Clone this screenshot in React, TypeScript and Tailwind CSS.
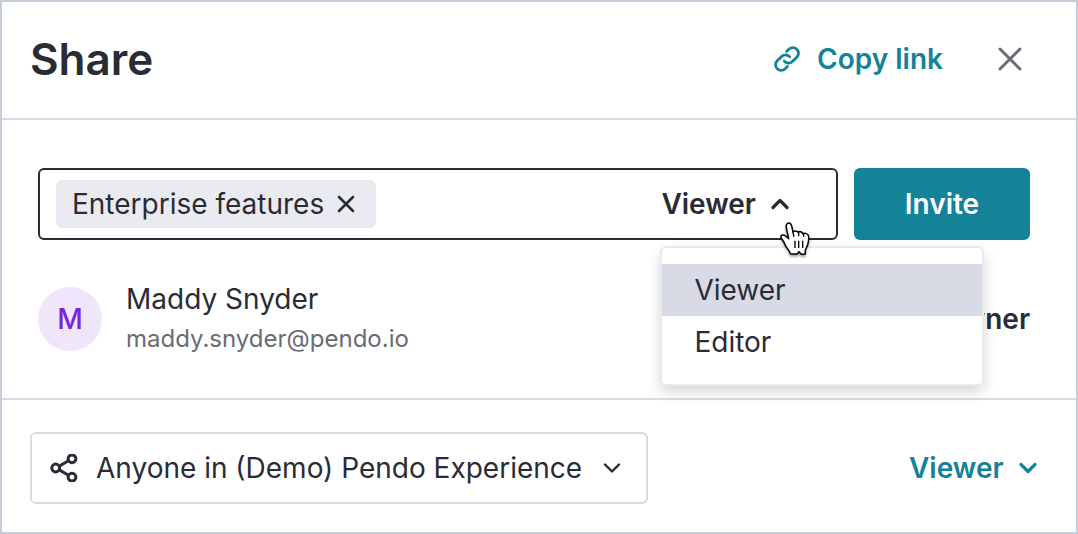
import { useState } from 'react';
import type { ReactNode } from 'react';

type IconProps = {
  className?: string;
  size: number;
  strokeWidth?: number;
  children: ReactNode;
};

const Icon = ({ className = '', size, strokeWidth = 2, children }: IconProps) => (
  <svg
    aria-hidden="true"
    className={`shrink-0 ${className}`}
    fill="none"
    height={size}
    stroke="currentColor"
    strokeLinecap="round"
    strokeLinejoin="round"
    strokeWidth={strokeWidth}
    viewBox={`0 0 ${size} ${size}`}
    width={size}
  >
    {children}
  </svg>
);

const LinkIcon = () => (
  <Icon size={28} strokeWidth={2.8}>
    <path d="M13.6 6.4 15.8 4.2a5.6 5.6 0 0 1 8 8l-4.4 4.4a5.6 5.6 0 0 1-8.2-.4" />
    <path d="M14.4 21.6 12.2 23.8a5.6 5.6 0 0 1-8-8l4.4-4.4a5.6 5.6 0 0 1 8.2.4" />
  </Icon>
);

const ShareIcon = () => (
  <Icon size={28} strokeWidth={3}>
    <circle cx="5.7" cy="14" r="3.9" />
    <circle cx="22" cy="4.8" r="3.9" />
    <circle cx="22" cy="23.2" r="3.9" />
    <path d="M9.2 12.1 18.5 6.8M9.2 15.9l9.3 5.3" />
  </Icon>
);

const Chevron = ({ up, className, strokeWidth }: { up?: boolean; className?: string; strokeWidth: number }) => (
  <Icon className={className} size={20} strokeWidth={strokeWidth}>
    <path d={up ? 'M3 13.5l7-7 7 7' : 'M3 6.5l7 7 7-7'} />
  </Icon>
);

const HandCursor = () => (
  <svg
    aria-hidden="true"
    className="pointer-events-none absolute top-[37px] left-[119px] z-20 drop-shadow-[0_2px_1px_rgba(0,0,0,0.35)]"
    height="36"
    viewBox="45 108 96 108"
    width="32"
  >
    <path
      d="M76 206c-1-7-7-13-12-20-4-6-6-14-11-20-4-5-7-9-5-13 3-5 10-3 14 0l9 8c-1-10-6-22-7-33-1-7 1-14 7-14 7 0 9 7 10 13l3 14c2-4 12-5 15 1 4-4 12-2 14 4 5-3 14-1 17 5 2 6 1 16-1 24-1 8-6 14-8 20v11c-3 1-10 2-13 1l-6-7-6 7c-6 1-13 0-20-1Z"
      fill="#fff"
      stroke="#000"
      strokeLinejoin="round"
      strokeWidth="4.5"
    />
    <path d="M84 140l2 14M101 142v10M116 146v8" stroke="#000" strokeLinecap="round" strokeWidth="4" />
    <path d="M90 167v22M101 167v22M113 167v22" stroke="#000" strokeWidth="4" />
  </svg>
);

const roles = ['Viewer', 'Editor'];

const RolePicker = () => {
  const [role, setRole] = useState('Viewer');
  const [open, setOpen] = useState(true);

  return (
    <div className="relative mr-[46px] shrink-0">
      <button
        aria-expanded={open}
        aria-haspopup="menu"
        className="flex items-center gap-[14px] font-semibold"
        onClick={() => setOpen(!open)}
        type="button"
      >
        {role}
        <Chevron strokeWidth={3.2} up />
      </button>
      {open && (
        <ul
          className="absolute top-[62px] left-0 z-10 -ml-px w-[324px] rounded-md border-2 border-[#e9eaf0] bg-white py-4 shadow-[0_6px_14px_rgba(0,0,0,0.16)]"
          role="menu"
        >
          {roles.map((item) => (
            <li key={item} role="none">
              <button
                aria-checked={item === role}
                className={`block h-[52px] w-full px-8 text-left ${item === role ? 'bg-[#d8dbe5]' : 'bg-white'}`}
                onClick={() => setRole(item)}
                role="menuitemradio"
                type="button"
              >
                {item}
              </button>
            </li>
          ))}
        </ul>
      )}
      <HandCursor />
    </div>
  );
};

export default function App() {
  return (
    <main className="border-2 border-[#c3d0db] bg-white font-['Inter',sans-serif] text-[28px] leading-10 text-[#2a2c35]">
      <header className="flex items-center justify-between border-b-2 border-[#d8dbe5] pt-[29px] pr-[52px] pb-[31px] pl-7">
        <h1 className="text-[44px] leading-[56px] font-semibold">Share</h1>
        <div className="flex items-center gap-[53px]">
          <button className="flex items-center gap-4 font-semibold text-[#148297]" type="button">
            <LinkIcon />
            Copy link
          </button>
          <button aria-label="Close" className="text-[#6a6c75]" type="button">
            <Icon size={28} strokeWidth={3}>
              <path d="M4 4l20 20M24 4 4 24" />
            </Icon>
          </button>
        </div>
      </header>

      <section className="pt-12 pr-[46px] pb-[39px] pl-9">
        <form className="flex gap-4" onSubmit={(event) => event.preventDefault()}>
          <div className="flex h-[72px] min-w-0 flex-1 items-center rounded-md border-2 border-[#2a2c35] pl-4">
            <span className="flex h-12 shrink-0 items-center gap-3 rounded-md bg-[#eaebf0] pr-5 pl-4">
              Enterprise features
              <button aria-label="Remove Enterprise features" type="button">
                <Icon size={20} strokeWidth={2.6}>
                  <path d="M3 3l14 14M17 3 3 17" />
                </Icon>
              </button>
            </span>
            <input aria-label="Add people or groups" className="min-w-0 flex-1 px-3 outline-none" type="text" />
            <RolePicker />
          </div>
          <button className="w-44 rounded-md bg-[#148297] font-semibold text-white" type="submit">
            Invite
          </button>
        </form>

        <div className="mt-[39px] flex items-center">
          <div className="mr-6 flex size-16 items-center justify-center rounded-full bg-[#f0e6fc] font-medium text-[#7a22e0]">
            M
          </div>
          <div className="flex-1">
            <div>Maddy Snyder</div>
            <div className="text-2xl leading-10 text-[#6a6c75]">maddy.snyder@pendo.io</div>
          </div>
          <div className="font-semibold">Owner</div>
        </div>
      </section>

      <footer className="flex items-center justify-between border-t-2 border-[#d8dbe5] pt-8 pr-[38px] pb-7 pl-7">
        <label className="relative flex h-[72px] items-center rounded-md border-2 border-[#d8dbe5] pl-[18px]">
          <ShareIcon />
          <select aria-label="Who has access" className="h-full appearance-none bg-transparent pr-[63px] pl-[18px] outline-none">
            <option>Anyone in (Demo) Pendo Experience</option>
          </select>
          <Chevron className="pointer-events-none absolute right-6" strokeWidth={2.4} />
        </label>
        <label className="relative flex items-center font-semibold text-[#148297]">
          <select aria-label="Access level" className="appearance-none bg-transparent pr-[34px] outline-none">
            <option>Viewer</option>
            <option>Editor</option>
          </select>
          <Chevron className="pointer-events-none absolute right-0" strokeWidth={3.2} />
        </label>
      </footer>
    </main>
  );
}
